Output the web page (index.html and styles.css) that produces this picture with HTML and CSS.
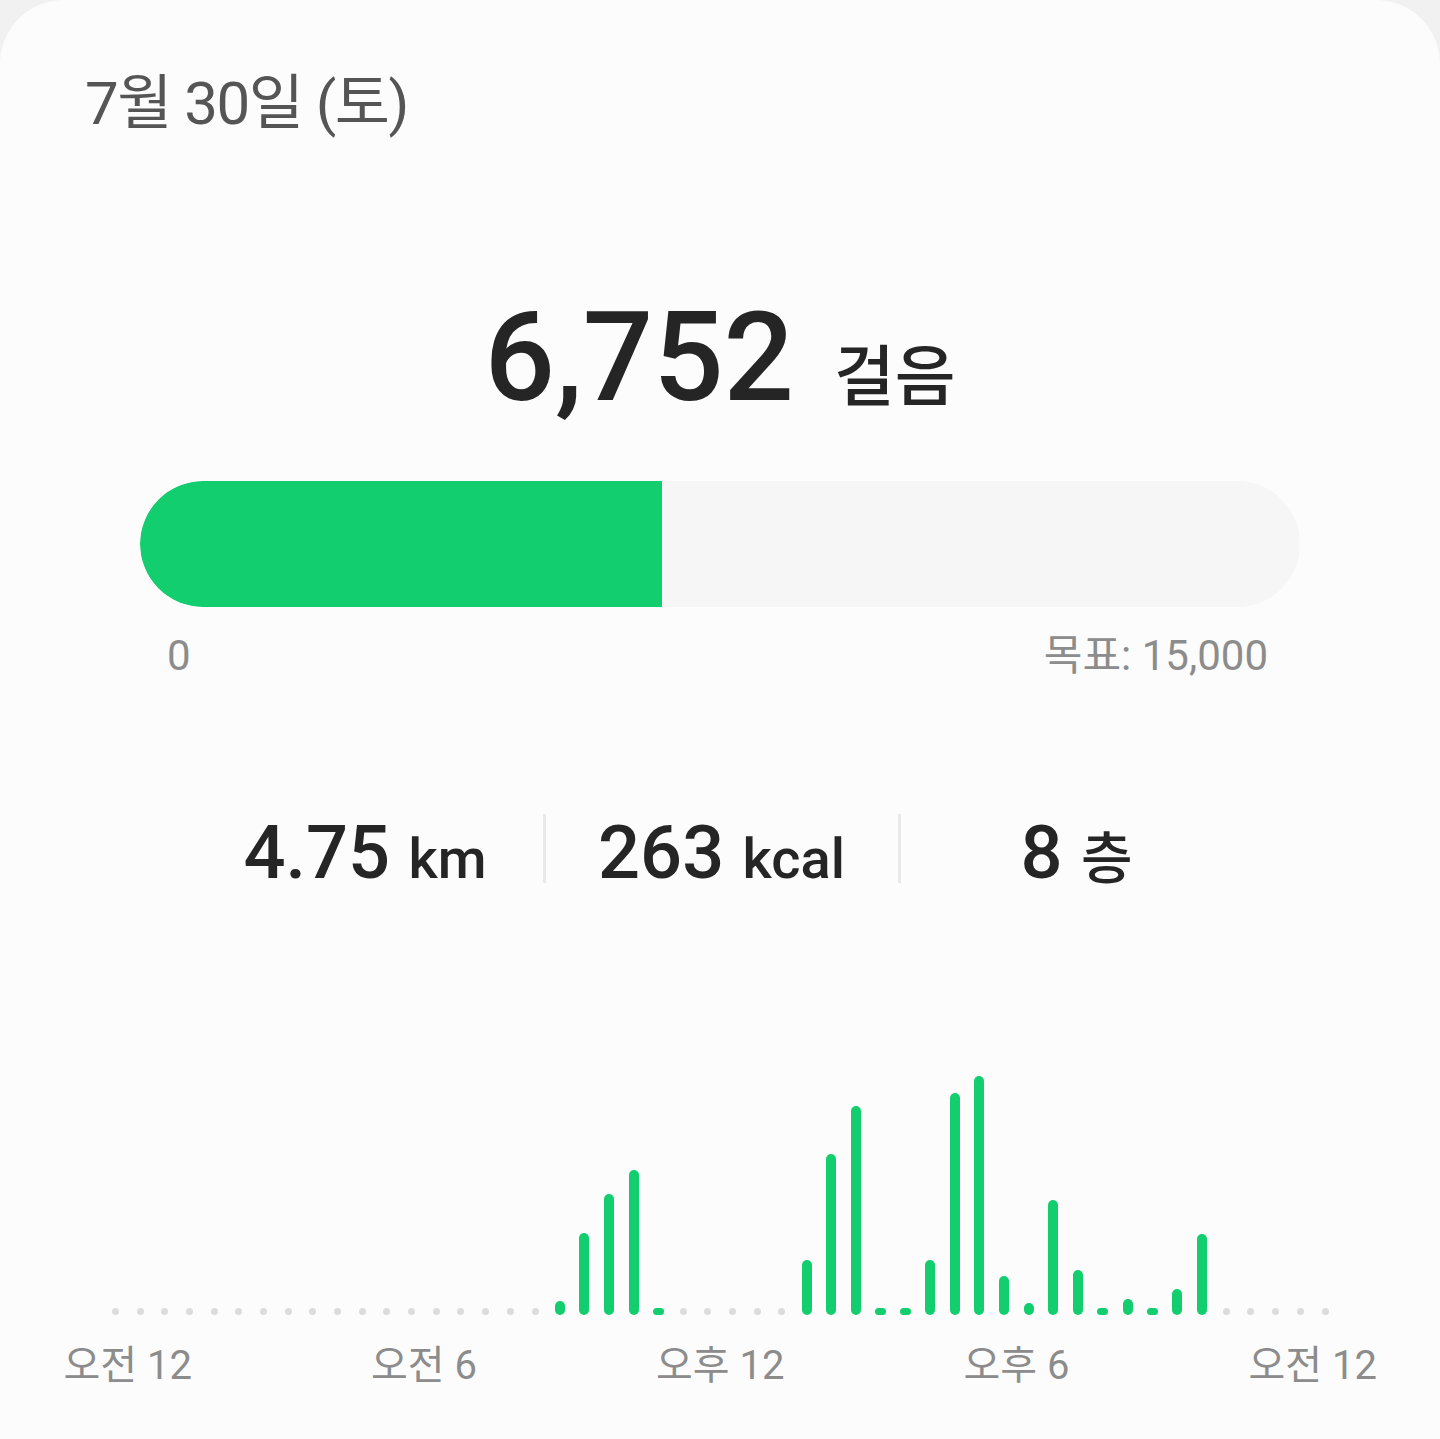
FILE: index.html
```html
<!DOCTYPE html>
<html lang="ko">
  <head>
    <meta charset="utf-8">
    <title>걸음</title>
    <link rel="stylesheet" href="styles.css">
  </head>
  <body>
    <div class="card">
      <div class="date">7월 30일 (토)</div>

      <div class="steps">6,752<span class="steps-unit">걸음</span></div>

      <div class="goalbar">
        <div class="goalbar-fill" style="width:45%"></div>
      </div>
      <div class="goal-labels">
        <span>0</span>
        <span>목표: 15,000</span>
      </div>

      <div class="stats">
        <div class="stat">4.75 <span class="stat-unit">km</span></div>
        <div class="stat">263 <span class="stat-unit">kcal</span></div>
        <div class="stat">8 <span class="stat-unit">층</span></div>
      </div>

      <!-- 30 min slots, gray dot = no steps -->
      <div class="chart">
        <div class="slot"><i class="dot"></i></div>
        <div class="slot"><i class="dot"></i></div>
        <div class="slot"><i class="dot"></i></div>
        <div class="slot"><i class="dot"></i></div>
        <div class="slot"><i class="dot"></i></div>
        <div class="slot"><i class="dot"></i></div>
        <div class="slot"><i class="dot"></i></div>
        <div class="slot"><i class="dot"></i></div>
        <div class="slot"><i class="dot"></i></div>
        <div class="slot"><i class="dot"></i></div>
        <div class="slot"><i class="dot"></i></div>
        <div class="slot"><i class="dot"></i></div>
        <div class="slot"><i class="dot"></i></div>
        <div class="slot"><i class="dot"></i></div>
        <div class="slot"><i class="dot"></i></div>
        <div class="slot"><i class="dot"></i></div>
        <div class="slot"><i class="dot"></i></div>
        <div class="slot"><i class="dot"></i></div>
        <div class="slot"><i class="bar" style="height:14px"></i></div>
        <div class="slot"><i class="bar" style="height:82px"></i></div>
        <div class="slot"><i class="bar" style="height:121px"></i></div>
        <div class="slot"><i class="bar" style="height:145px"></i></div>
        <div class="slot"><i class="bar pill"></i></div>
        <div class="slot"><i class="dot"></i></div>
        <div class="slot"><i class="dot"></i></div>
        <div class="slot"><i class="dot"></i></div>
        <div class="slot"><i class="dot"></i></div>
        <div class="slot"><i class="dot"></i></div>
        <div class="slot"><i class="bar" style="height:55px"></i></div>
        <div class="slot"><i class="bar" style="height:161px"></i></div>
        <div class="slot"><i class="bar" style="height:209px"></i></div>
        <div class="slot"><i class="bar pill"></i></div>
        <div class="slot"><i class="bar pill"></i></div>
        <div class="slot"><i class="bar" style="height:55px"></i></div>
        <div class="slot"><i class="bar" style="height:222px"></i></div>
        <div class="slot"><i class="bar" style="height:239px"></i></div>
        <div class="slot"><i class="bar" style="height:39px"></i></div>
        <div class="slot"><i class="bar" style="height:12px"></i></div>
        <div class="slot"><i class="bar" style="height:115px"></i></div>
        <div class="slot"><i class="bar" style="height:45px"></i></div>
        <div class="slot"><i class="bar pill"></i></div>
        <div class="slot"><i class="bar" style="height:16px"></i></div>
        <div class="slot"><i class="bar pill"></i></div>
        <div class="slot"><i class="bar" style="height:26px"></i></div>
        <div class="slot"><i class="bar" style="height:81px"></i></div>
        <div class="slot"><i class="dot"></i></div>
        <div class="slot"><i class="dot"></i></div>
        <div class="slot"><i class="dot"></i></div>
        <div class="slot"><i class="dot"></i></div>
        <div class="slot"><i class="dot"></i></div>
      </div>
      <div class="ticks">
        <div class="tick t0"><span>오전 12</span></div>
        <div class="tick t6"><span>오전 6</span></div>
        <div class="tick t12"><span>오후 12</span></div>
        <div class="tick t18"><span>오후 6</span></div>
        <div class="tick t24"><span>오전 12</span></div>
      </div>
    </div>
  </body>
</html>
```

FILE: styles.css
```css
body{
  margin:0;
  background-color:#f1f1f1;
  font-family: Roboto, "Noto Sans CJK KR", sans-serif;
  color:#252525;
}
.card{
  background-color:#fcfcfc;
  border-radius:64px 64px 0 0;
  min-height:1439px;
  overflow:hidden;
}
.date{
  margin-top:69px;
  padding-left:85px;
  font-size:60px;
  line-height:70px;
  letter-spacing:-1.5px;
  color:#555;
}
.steps{
  margin-top:154px;
  text-align:center;
  font-size:124px;
  line-height:130px;
  font-weight:500;
}
.steps-unit{
  font-size:66px;
  margin-left:40px;
}
.goalbar{
  margin:38px 140px 0;
  height:126px;
  border-radius:63px;
  background-color:#f6f6f6;
  overflow:hidden;
}
.goalbar-fill{
  height:100%;
  background-color:#13ce6e;
  border-radius:63px 0 0 63px;
}
.goal-labels{
  margin:24px 172px 0 167px;
  display:flex;
  justify-content:space-between;
  font-size:42px;
  line-height:50px;
  color:#8c8c8c;
}
.stats{
  margin-top:133px;
  display:grid;
  grid-template-columns:355px 355px 355px;
  justify-content:center;
}
.stat{
  height:69px;
  box-sizing:border-box;
  padding-top:4px;
  text-align:center;
  font-size:74px;
  line-height:69px;
  font-weight:500;
  white-space:nowrap;
}
.stat + .stat{
  border-left:3px solid #e9e9e9;
}
.stat-unit{
  font-size:56px;
}

/* chart */
.chart, .ticks{
  display:grid;
  grid-template-columns:repeat(50, 24.69px);
  margin-left:103px;
}
.chart{
  margin-top:172px;
  height:260px;
}
.slot{
  display:flex;
  justify-content:center;
  align-items:flex-end;
}
.dot{
  width:7px;
  height:7px;
  border-radius:50%;
  background-color:#dcdcdc;
}
.bar{
  width:10px;
  border-radius:5px;
  background-color:#13ce6e;
}
.bar.pill{
  width:11px;
  height:7px;
  border-radius:4px;
}
.ticks{
  margin-top:27px;
  font-size:40px;
  line-height:48px;
  color:#8c8c8c;
}
.tick{
  grid-column:span 2;
  display:flex;
  justify-content:center;
  white-space:nowrap;
}
.t0{ grid-column:1 / 3; }
.t6{ grid-column:13 / 15; }
.t12{ grid-column:25 / 27; }
.t18{ grid-column:37 / 39; }
.t24{ grid-column:49 / 51; }
```
